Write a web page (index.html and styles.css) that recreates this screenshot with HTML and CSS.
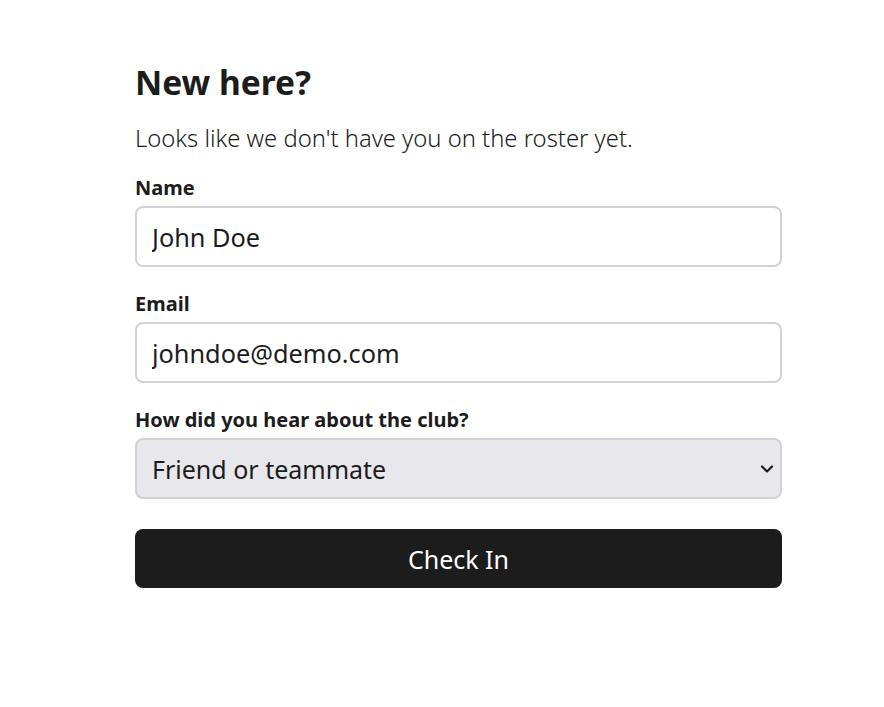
FILE: index.html
```html
<!DOCTYPE html>
<html lang="en">
<head>
<meta charset="utf-8">
<title>New here?</title>
<link rel="stylesheet" href="styles.css">
</head>
<body>
<main class="page">
  <form class="card">
    <h1 class="title">New here?</h1>
    <p class="lead">Looks like we don't have you on the roster yet.</p>
    <label class="label" for="name">Name</label>
    <input class="field" id="name" type="text" value="John Doe">
    <label class="label" for="email">Email</label>
    <input class="field" id="email" type="email" value="johndoe@demo.com">
    <label class="label" for="source">How did you hear about the club?</label>
    <div class="select-wrap">
      <select class="field select" id="source">
        <option>Friend or teammate</option>
        <option>Social media</option>
        <option>Other</option>
      </select>
      <svg class="chevron" width="14" height="10" viewBox="0 0 14 10" aria-hidden="true"><path d="M2 2.5l5 5 5-5" fill="none" stroke="#1c1c1c" stroke-width="2.2" stroke-linecap="round" stroke-linejoin="round"/></svg>
    </div>
    <button class="btn" type="button">Check In</button>
  </form>
</main>
</body>
</html>
```
FILE: styles.css
```css
* { box-sizing: border-box; }
html, body { margin: 0; padding: 0; background: #ffffff; }
body {
  font-family: "Noto Sans", "Open Sans", sans-serif;
  color: #1c1c1c;
}
.page {
  padding: 62px 0 0 135px;
}
.card {
  width: 647px;
  display: flex;
  flex-direction: column;
}
.title {
  margin: 0 0 20px;
  font-size: 33.5px;
  line-height: 40px;
  font-weight: 700;
}
.lead {
  margin: 0 0 22px;
  font-size: 23.8px;
  line-height: 32px;
  font-weight: 300;
}
.label {
  display: block;
  font-size: 20px;
  line-height: 24px;
  font-weight: 700;
  margin-bottom: 6px;
}
.field {
  display: block;
  width: 100%;
  height: 61px;
  margin: 0 0 25px;
  padding: 0 15px;
  border: 2px solid #d2d2d4;
  border-radius: 8px;
  background: #ffffff;
  font-family: inherit;
  font-size: 25.3px;
  color: #1c1c1c;
  outline: none;
}
.select-wrap {
  position: relative;
  margin-bottom: 30px;
}
.select {
  margin: 0;
  appearance: none;
  -webkit-appearance: none;
  background: #e8e8ec;
  font-size: 25px;
}
.chevron {
  position: absolute;
  right: 8px;
  top: 26px;
  pointer-events: none;
}
.btn {
  width: 100%;
  height: 59px;
  border: none;
  border-radius: 8px;
  background: #1c1c1c;
  color: #ffffff;
  font-family: inherit;
  font-size: 25px;
  cursor: pointer;
}
```
